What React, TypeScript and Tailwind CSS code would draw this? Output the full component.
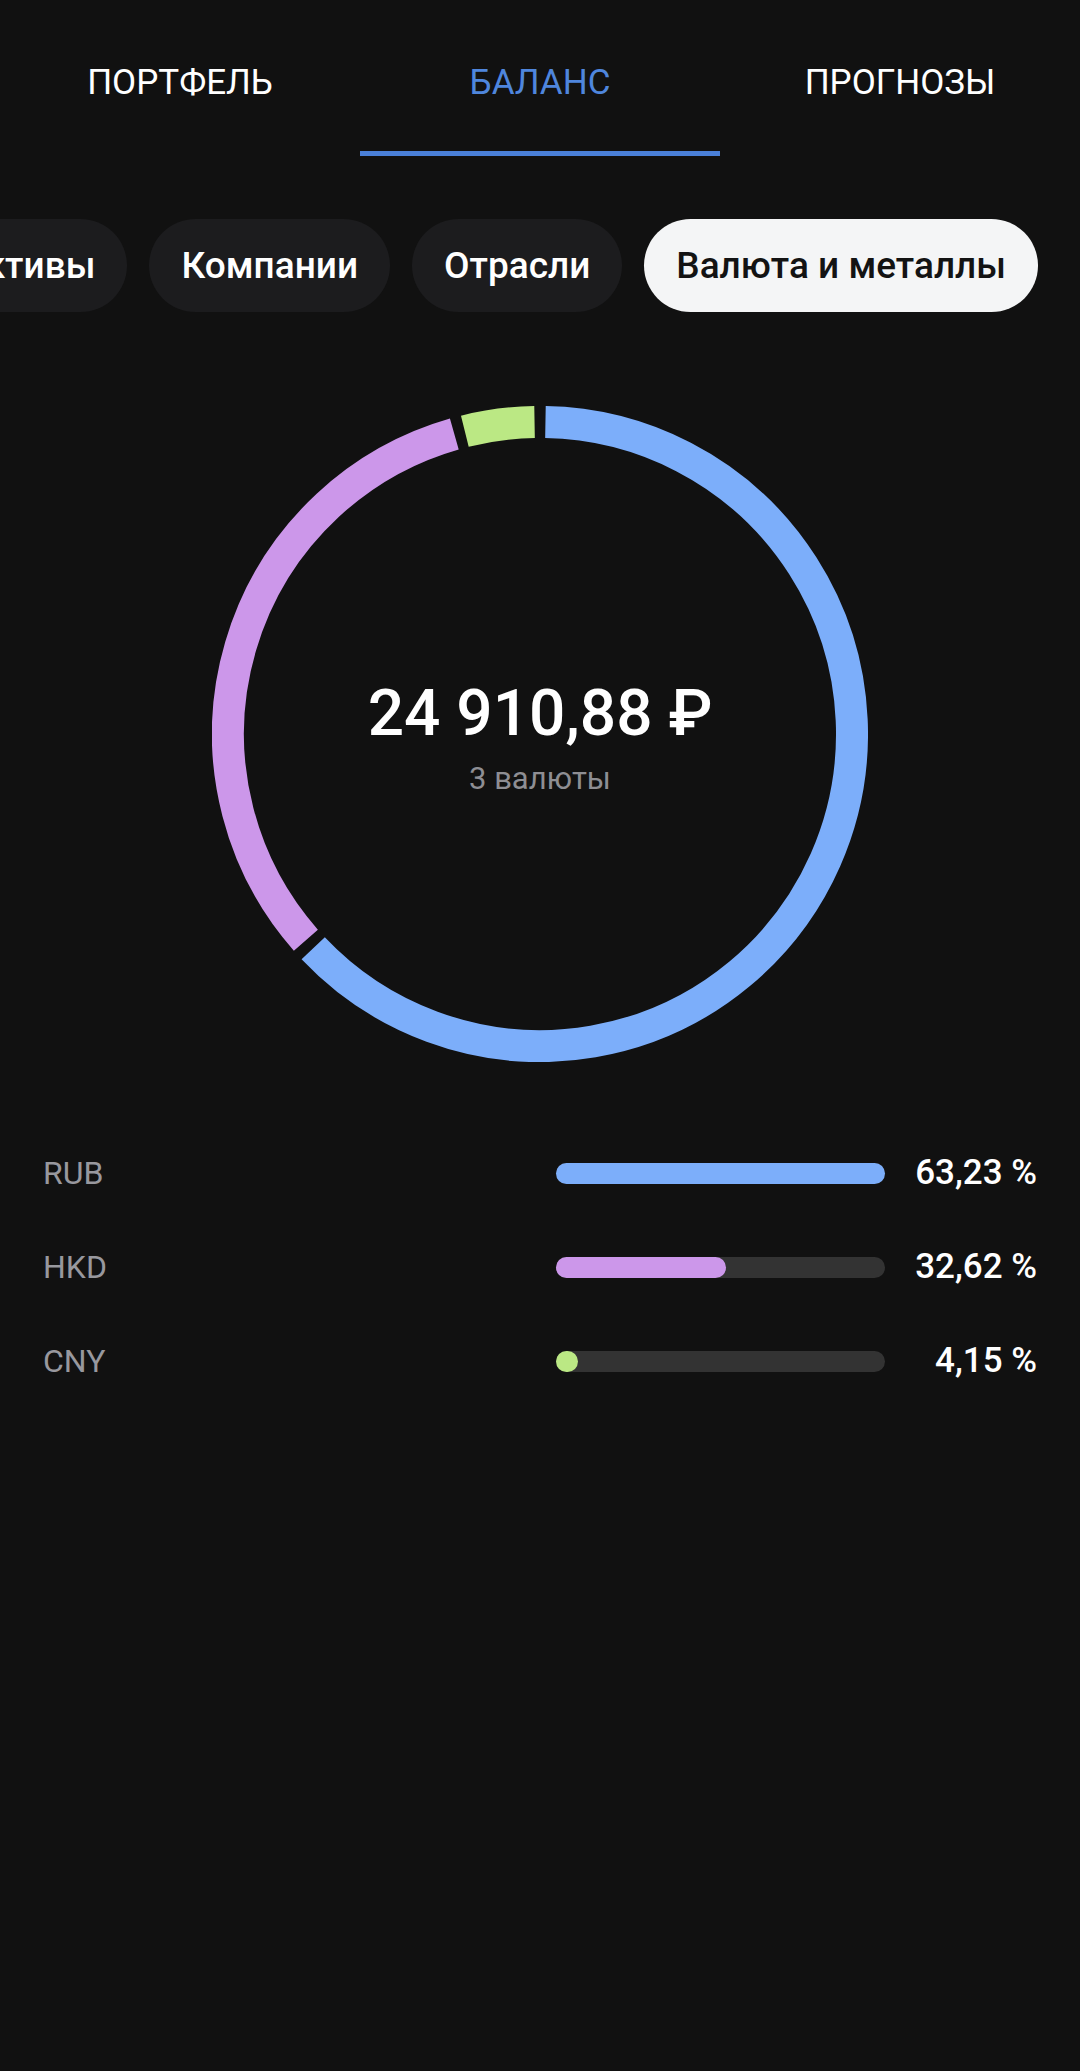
import React from "react";

const tabs = [
  { key: "portfolio", label: "ПОРТФЕЛЬ" },
  { key: "balance", label: "БАЛАНС" },
  { key: "forecast", label: "ПРОГНОЗЫ" },
];

const chips = ["Активы", "Компании", "Отрасли", "Валюта и металлы"];

const currencies = [
  { code: "RUB", pct: 63.23, label: "63,23 %", color: "#7caefa" },
  { code: "HKD", pct: 32.62, label: "32,62 %", color: "#cc97ea" },
  { code: "CNY", pct: 4.15, label: "4,15 %", color: "#bbe884" },
];

const SIZE = 656;
const R = 312;
const C = SIZE / 2;
const GAP = 2; // degrees between segments

function point(deg: number) {
  const rad = ((deg - 90) * Math.PI) / 180;
  return [C + R * Math.cos(rad), C + R * Math.sin(rad)];
}

function arcPath(startDeg: number, endDeg: number) {
  const [x1, y1] = point(startDeg);
  const [x2, y2] = point(endDeg);
  const large = endDeg - startDeg > 180 ? 1 : 0;
  return `M ${x1} ${y1} A ${R} ${R} 0 ${large} 1 ${x2} ${y2}`;
}

function Donut() {
  let acc = 0;
  const segments = currencies.map((c) => {
    const start = acc;
    const end = acc + (c.pct / 100) * 360;
    acc = end;
    return { ...c, d: arcPath(start + GAP / 2, end - GAP / 2) };
  });

  return (
    <div className="relative mx-auto mt-[94px] h-[656px] w-[656px]">
      <svg width={SIZE} height={SIZE} viewBox={`0 0 ${SIZE} ${SIZE}`}>
        {segments.map((s) => (
          <path key={s.code} d={s.d} fill="none" stroke={s.color} strokeWidth={32} />
        ))}
      </svg>
      <div className="absolute inset-0 flex flex-col items-center pt-[270px]">
        <div className="text-[64px] font-medium leading-[75px] text-white">24 910,88 ₽</div>
        <div className="mt-[10px] text-[31px] leading-[36px] text-[#8e8e93]">3 валюты</div>
      </div>
    </div>
  );
}

export default function App() {
  const max = Math.max(...currencies.map((c) => c.pct));
  const active = "balance";

  return (
    <div
      className="min-h-[2071px] w-full bg-[#111111] text-white"
      style={{ fontFamily: "Roboto, 'Noto Sans', sans-serif" }}
    >
      {/* top tabs */}
      <div className="flex">
        {tabs.map((t) => {
          const isActive = t.key === active;
          return (
            <div key={t.key} className="flex h-[156px] flex-1 flex-col items-center">
              <span
                className={
                  isActive
                    ? "mt-[61px] text-[35px] leading-[44px] text-[#4f86dd]"
                    : "mt-[61px] text-[35px] leading-[44px] text-white"
                }
              >
                {t.label}
              </span>
              <div className={isActive ? "mt-auto h-[5px] w-full bg-[#4a80d9]" : "mt-auto h-[5px] w-full"} />
            </div>
          );
        })}
      </div>

      {/* filter chips, scrolled to the end */}
      <div className="mt-[63px] flex justify-end gap-[22px] overflow-hidden pr-[42px]">
        {chips.map((c, i) => {
          const isActive = i === chips.length - 1;
          return (
            <div
              key={c}
              className={
                isActive
                  ? "flex h-[93px] shrink-0 items-center rounded-full bg-[#f4f5f6] px-[32px] text-[37px] font-medium text-[#131313]"
                  : "flex h-[93px] shrink-0 items-center rounded-full bg-[#1c1c1e] px-[32px] text-[37px] font-medium text-white"
              }
            >
              {c}
            </div>
          );
        })}
      </div>

      <Donut />

      {/* legend */}
      <div className="mt-[64px]">
        {currencies.map((c) => {
          const w = (c.pct / max) * 329;
          return (
            <div key={c.code} className="flex h-[94px] items-center px-[43px]">
              <div className="flex-1 text-[32px] text-[#98989e]">{c.code}</div>
              <div className="h-[21px] w-[329px] rounded-full bg-[#333333]">
                <div
                  className="h-full rounded-full"
                  style={{ width: Math.max(21, w), backgroundColor: c.color }}
                />
              </div>
              <div className="w-[152px] text-right text-[35px] font-medium">{c.label}</div>
            </div>
          );
        })}
      </div>
    </div>
  );
}
